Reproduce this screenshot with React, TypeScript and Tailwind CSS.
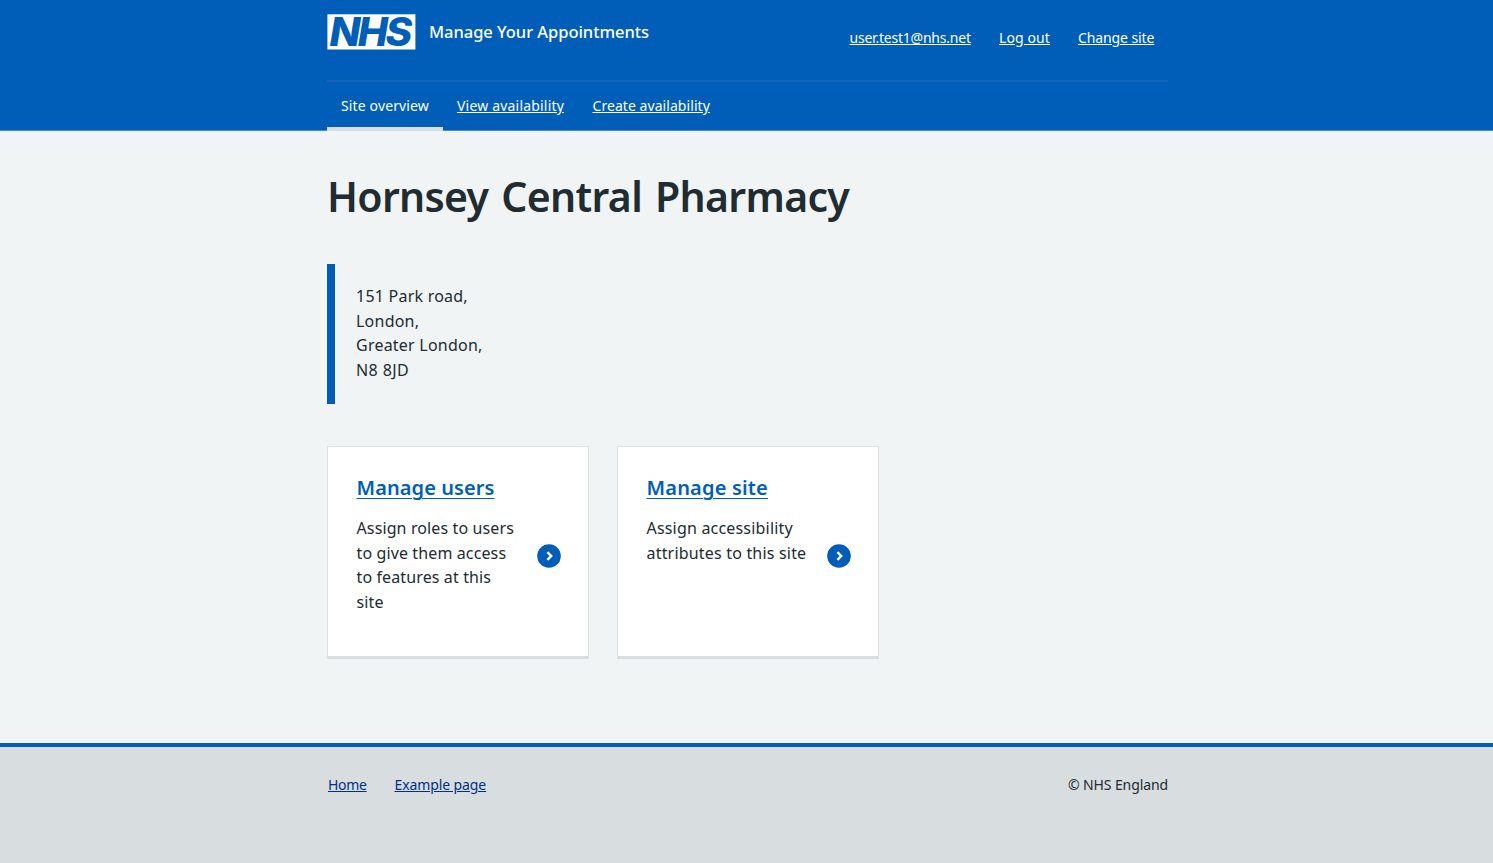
const navLinks = [
  { label: "Site overview", current: true, text: "w-[88px] tracking-[0.138px]" },
  { label: "View availability", current: false, text: "w-[107.5px] tracking-[0.188px]" },
  { label: "Create availability", current: false, text: "w-[118px] tracking-[0.06px]" },
];

const userLinks = [
  { label: "user.test1@nhs.net", text: "w-[121.5px] tracking-[-0.22px]" },
  { label: "Log out", text: "w-[51px] tracking-[0.11px]" },
  { label: "Change site", text: "w-[76px] tracking-[-0.1px]" },
];

const cards = [
  {
    title: "Manage users",
    titleClass: "tracking-[0.08px]",
    textClass: "tracking-[0.12px]",
    lines: ["Assign roles to users", "to give them access", "to features at this", "site"],
  },
  {
    title: "Manage site",
    titleClass: "tracking-[0.18px]",
    textClass: "tracking-[0.19px]",
    lines: ["Assign accessibility", "attributes to this site"],
  },
];

function NhsLogo() {
  return (
    <svg className="mt-[14px] h-9 w-[89px] shrink-0 overflow-visible" viewBox="0 0 89 36" role="img" aria-label="NHS">
      <rect x="0.4" y="0.3" width="88" height="35.2" fill="#fff" />
      <text
        x="2.5"
        y="32"
        textLength="80"
        lengthAdjust="spacingAndGlyphs"
        fill="#005eb8"
        className="font-['Inter',sans-serif] text-[39px] font-extrabold italic tracking-[-2.5px]"
      >
        NHS
      </text>
    </svg>
  );
}

function ArrowCircle() {
  return (
    <svg className="mt-[28px] size-6 shrink-0" viewBox="0 0 24 24" aria-hidden="true">
      <circle cx="12" cy="12" r="11.8" fill="#005eb8" />
      <path d="M10.4 8.2 14.2 12l-3.8 3.8" fill="none" stroke="#fff" strokeWidth="2.4" />
    </svg>
  );
}

export default function App() {
  return (
    <div className="flex h-[863px] flex-col overflow-hidden bg-[#f0f4f5] font-['Noto_Sans',sans-serif] text-[#212b32]">
      <header className="h-[131px] shrink-0 border-b border-[#4b8bcb] bg-[#005eb8] pl-[327px] text-white">
        <div className="flex h-20 w-[841px] items-start justify-between">
          <a className="flex" href="#">
            <NhsLogo />
            <span className="ml-[13px] mt-5 whitespace-nowrap text-[16.5px] font-medium leading-6 tracking-[-0.047px]">
              Manage Your Appointments
            </span>
          </a>
          <div className="mr-[14px] mt-7 flex gap-7 text-sm leading-5">
            {userLinks.map((link) => (
              <a key={link.label} href="#" className={`whitespace-nowrap underline underline-offset-1 ${link.text}`}>
                {link.label}
              </a>
            ))}
          </div>
        </div>
        <nav className="flex h-[50px] w-[841px] border-t-2 border-[#1763b9] text-sm leading-5">
          {navLinks.map((link) => (
            <a
              key={link.label}
              href="#"
              className={
                link.current
                  ? "flex h-[49px] w-[116px] border-b-4 border-[#d8dde0] pl-[14px] pt-[14px]"
                  : "flex px-[14px] pt-[14px] underline underline-offset-1"
              }
            >
              <span className={`whitespace-nowrap ${link.text}`}>{link.label}</span>
            </a>
          ))}
        </nav>
      </header>

      <main className="flex h-[612px] shrink-0 flex-col pl-[327px] pt-[38px]">
        <h1 className="whitespace-nowrap text-[41px] font-semibold leading-[54px] tracking-[-0.68px] [word-spacing:3px]">
          Hornsey Central Pharmacy
        </h1>
        <div className="mt-[41px] h-[140px] w-[400px] border-l-8 border-[#005eb8] pl-[21px] pt-5 text-base leading-[24.5px] tracking-[0.23px]">
          <p>151 Park road,</p>
          <p>London,</p>
          <p>Greater London,</p>
          <p className="tracking-[0.4px]">N8 8JD</p>
        </div>
        <div className="mt-[42px] flex gap-7">
          {cards.map((card) => (
            <section
              key={card.title}
              className="h-[213px] w-[262px] border border-b-[3px] border-[#dde2e5] border-b-[#d8dde0] bg-white pl-[28.5px] pr-[27px] pt-[27px]"
            >
              <h2 className="text-xl font-semibold leading-7 text-[#005eb8]">
                <a href="#" className={`underline decoration-1 underline-offset-[3px] ${card.titleClass}`}>
                  {card.title}
                </a>
              </h2>
              <div className="mt-[14px] flex items-start justify-between">
                <p className={`text-base leading-[24.5px] ${card.textClass}`}>
                  {card.lines.map((line) => (
                    <span key={line} className="block whitespace-nowrap">
                      {line}
                    </span>
                  ))}
                </p>
                <ArrowCircle />
              </div>
            </section>
          ))}
        </div>
      </main>

      <footer className="flex-1 border-t-4 border-[#005eb8] bg-[#d8dde0] pl-[328px] pt-7 text-sm leading-5">
        <div className="flex w-[840px] justify-between whitespace-nowrap">
          <div className="flex gap-7 text-[#003087]">
            <a href="#" className="w-[38.5px] tracking-[-0.3px] underline underline-offset-1">Home</a>
            <a href="#" className="tracking-[-0.1px] underline underline-offset-1">Example page</a>
          </div>
          <p className="tracking-[-0.1px]">© NHS England</p>
        </div>
      </footer>
    </div>
  );
}
